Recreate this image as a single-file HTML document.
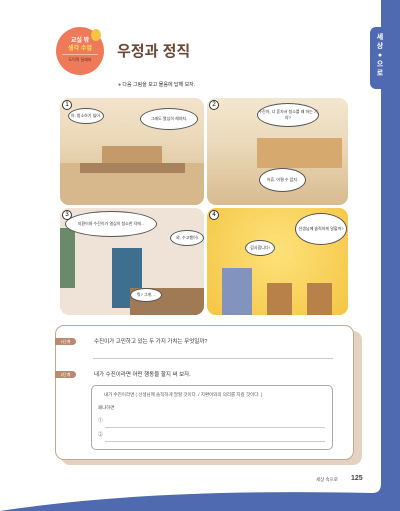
<!DOCTYPE html><html><head><meta charset="utf-8"><style>
body{margin:0;width:400px;height:511px;overflow:hidden;background:#fff;position:relative;font-family:"Liberation Sans","Noto Sans CJK KR",sans-serif}
.a{position:absolute}
.p{position:absolute;border-radius:9px;overflow:hidden}
.b{position:absolute;background:#fff;border:1px solid #555;border-radius:50%;font-size:4px;text-align:center;display:flex;align-items:center;justify-content:center;color:#333}
.n{position:absolute;width:8px;height:8px;border:1px solid #333;border-radius:50%;background:#fff;font-size:6px;text-align:center;line-height:8px}
</style></head><body>
<svg class="a" style="left:0;top:0" width="400" height="511"><path d="M381 0 H400 V511 H0 Q150 488 372 493 Q381 493 381 484 Z" fill="#4f6ab0"/></svg>
<div class="a" style="left:370px;top:27px;width:20px;height:62px;background:#4f6ab0;border-radius:6px 0 0 6px"></div>
<div class="a" style="left:373px;top:33px;width:14px;color:#fff;font-size:7px;line-height:9px;text-align:center;font-weight:bold">세<br>상<br>●<br>으<br>로</div>
<div class="a" style="left:56px;top:27px;width:48px;height:48px;border-radius:50%;background:#ee7a5a"></div>
<div class="a" style="left:91px;top:29px;width:10px;height:12px;border-radius:50%;background:#f5c542"></div>
<div class="a" style="left:56px;top:37px;width:48px;text-align:center;color:#fff;font-size:6px;font-weight:bold;line-height:8px">교실 밖<br><span style="color:#ffe066">생각 수업</span></div>
<div class="a" style="left:62px;top:54px;width:36px;border-top:1px solid #f7b9a3"></div>
<div class="a" style="left:56px;top:57px;width:48px;text-align:center;font-size:4px;color:#5a2a1a">도덕적 딜레마</div>
<div class="a" style="left:117px;top:40px;font-size:15px;font-weight:bold;color:#6a4a3a">우정과 정직</div>
<div class="a" style="left:118px;top:81px;font-size:5px;color:#333"><span style="color:#7a5aa8">●</span> 다음 그림을 보고 물음에 답해 보자.</div>
<div class="p" style="left:60px;top:98px;width:144px;height:107px;background:linear-gradient(#f3e3cc 0,#ead8b8 40%,#d8b98e 100%)">
<div class="a" style="left:0;top:65px;width:144px;height:42px;background:#d7b88c"></div>
<div class="a" style="left:42px;top:48px;width:60px;height:25px;background:#c49a6a"></div>
<div class="a" style="left:20px;top:65px;width:105px;height:10px;background:#a8825c"></div>
<div class="b" style="left:8px;top:10px;width:34px;height:14px">아, 청소하기 싫어.</div>
<div class="b" style="left:80px;top:10px;width:56px;height:20px">그래도 열심히 해야지.</div></div>
<div class="p" style="left:207px;top:98px;width:141px;height:107px;background:linear-gradient(#f3e7d0 0,#ead8b8 45%,#d8bb90 100%)">
<div class="a" style="left:50px;top:40px;width:85px;height:30px;background:#d6a96e"></div>
<div class="b" style="left:50px;top:5px;width:60px;height:22px">수진아, 너 혼자서 청소를 왜 하는 거야?</div>
<div class="b" style="left:52px;top:70px;width:45px;height:22px">어휴, 어쩔 수 없지.</div></div>
<div class="p" style="left:60px;top:208px;width:144px;height:107px;background:#efe2d6">
<div class="a" style="left:0;top:20px;width:15px;height:60px;background:#6b8a6a"></div>
<div class="a" style="left:52px;top:40px;width:30px;height:60px;background:#3f6f8e"></div>
<div class="a" style="left:70px;top:80px;width:74px;height:27px;background:#a07a55"></div>
<div class="b" style="left:5px;top:3px;width:90px;height:24px">지환이와 수진이가 열심히 청소한 덕에...</div>
<div class="b" style="left:110px;top:22px;width:32px;height:14px">와, 수고했어!</div>
<div class="b" style="left:70px;top:80px;width:30px;height:12px">뭐? 그게…</div></div>
<div class="p" style="left:207px;top:208px;width:141px;height:107px;background:radial-gradient(circle at 50% 40%,#fde27a,#f4c544)">
<div class="a" style="left:15px;top:60px;width:30px;height:47px;background:#8294bd"></div>
<div class="a" style="left:60px;top:75px;width:25px;height:32px;background:#b8814a"></div>
<div class="a" style="left:100px;top:75px;width:25px;height:32px;background:#b8814a"></div>
<div class="b" style="left:88px;top:5px;width:50px;height:30px">선생님께 솔직하게 말할까?</div>
<div class="b" style="left:38px;top:32px;width:28px;height:14px">감사합니다!</div></div>
<div class="n" style="left:62px;top:100px">1</div><div class="n" style="left:209px;top:100px">2</div><div class="n" style="left:62px;top:210px">3</div><div class="n" style="left:209px;top:210px">4</div>
<div class="a" style="left:61px;top:331px;width:301px;height:134px;background:#e3d1c2;border-radius:9px"></div>
<div class="a" style="left:55px;top:325px;width:297px;height:133px;background:#fff;border:1px solid #c9a68c;border-radius:9px"></div>
<div class="a" style="left:55px;top:338px;width:21px;height:7px;background:#b98a6e;border-radius:0 4px 4px 0;color:#fff;font-size:4px;text-align:center;line-height:7px">1단계</div>
<div class="a" style="left:94px;top:337px;font-size:5.5px;color:#333">수진이가 고민하고 있는 두 가지 가치는 무엇일까?</div>
<div class="a" style="left:93px;top:358px;width:240px;border-top:1px solid #ccc"></div>
<div class="a" style="left:55px;top:371px;width:21px;height:7px;background:#b98a6e;border-radius:0 4px 4px 0;color:#fff;font-size:4px;text-align:center;line-height:7px">2단계</div>
<div class="a" style="left:94px;top:370px;font-size:5.5px;color:#333">내가 수진이라면 어떤 행동을 할지 써 보자.</div>
<div class="a" style="left:91px;top:385px;width:240px;height:63px;border:1px solid #aaa;border-radius:5px"></div>
<div class="a" style="left:104px;top:392px;font-size:4.5px;color:#555">내가 수진이라면 ( 선생님께 솔직하게 말할 것이다. / 지환이와의 의리를 지킬 것이다. )</div>
<div class="a" style="left:98px;top:405px;font-size:4.5px;color:#555">왜냐하면</div>
<div class="a" style="left:98px;top:417px;font-size:5px;color:#555">①</div>
<div class="a" style="left:105px;top:427px;width:220px;border-top:1px solid #ccc"></div>
<div class="a" style="left:98px;top:431px;font-size:5px;color:#555">②</div>
<div class="a" style="left:105px;top:441px;width:220px;border-top:1px solid #ccc"></div>
<div class="a" style="left:316px;top:477px;font-size:4.5px;color:#555">세상 속으로</div>
<div class="a" style="left:351px;top:475px;font-size:7px;color:#444;font-weight:bold">125</div>
</body></html>
